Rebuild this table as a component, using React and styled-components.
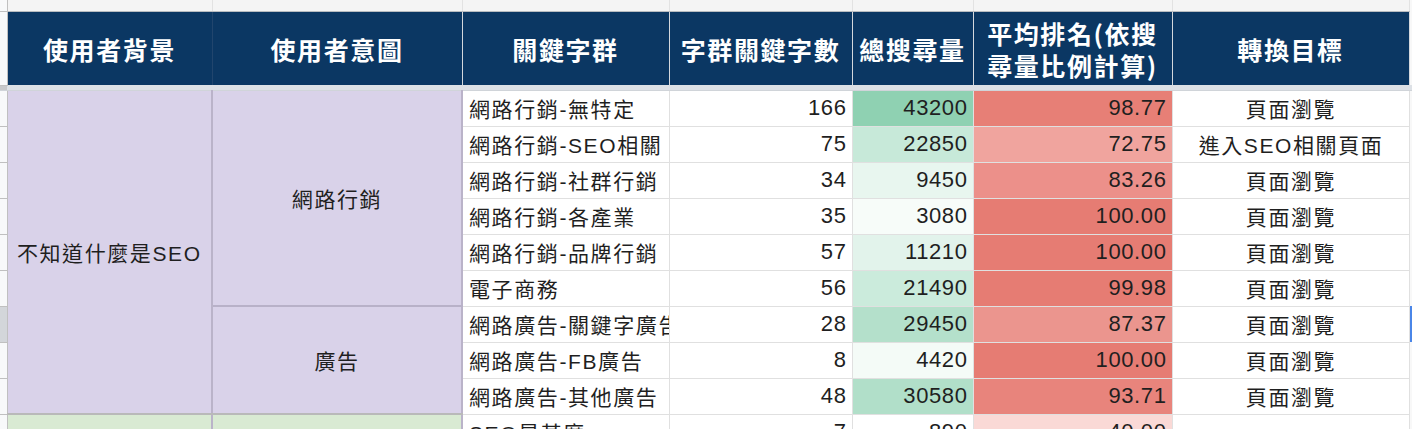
import styled, { createGlobalStyle } from "styled-components";

const GlobalStyle = createGlobalStyle`
  html, body {
    margin: 0;
    padding: 0;
    background: #ffffff;
    overflow: hidden;
  }
`;

const FONT = `"Liberation Sans", "Noto Sans CJK TC", sans-serif`;

const rows = [
  { name: "網路行銷-無特定", count: 166, volume: 43200, rank: "98.77", goal: "頁面瀏覽", green: "#8fd1b2", red: "#e77f76" },
  { name: "網路行銷-SEO相關", count: 75, volume: 22850, rank: "72.75", goal: "進入SEO相關頁面", green: "#c7e9d9", red: "#f0a49e" },
  { name: "網路行銷-社群行銷", count: 34, volume: 9450, rank: "83.26", goal: "頁面瀏覽", green: "#e8f6ef", red: "#ec908a" },
  { name: "網路行銷-各產業", count: 35, volume: 3080, rank: "100.00", goal: "頁面瀏覽", green: "#f7fcf9", red: "#e67c73" },
  { name: "網路行銷-品牌行銷", count: 57, volume: 11210, rank: "100.00", goal: "頁面瀏覽", green: "#e2f3eb", red: "#e67c73" },
  { name: "電子商務", count: 56, volume: 21490, rank: "99.98", goal: "頁面瀏覽", green: "#cbebdc", red: "#e67c73" },
  { name: "網路廣告-關鍵字廣告", count: 28, volume: 29450, rank: "87.37", goal: "頁面瀏覽", green: "#b4e0cb", red: "#eb958e" },
  { name: "網路廣告-FB廣告", count: 8, volume: 4420, rank: "100.00", goal: "頁面瀏覽", green: "#f4fbf7", red: "#e67c73" },
  { name: "網路廣告-其他廣告", count: 48, volume: 30580, rank: "93.71", goal: "頁面瀏覽", green: "#b1dfc9", red: "#e8847c" },
];

const SELECTED_ROW = 6;

const Sheet = styled.table`
  border-collapse: collapse;
  table-layout: fixed;
  width: 1414px;
  font-family: ${FONT};
  color: #1f1f1f;
`;

const Gutter = styled.td`
  padding: 0;
  background: ${(p) => (p.$selected ? "#d3d6da" : "#f8f9fa")};
  border-right: 1px solid #c0c0c0;
  border-bottom: 1px solid #c0c0c0;
`;

const TopCell = styled.td`
  height: 11px;
  padding: 0;
  background: #f4f4f4;
  border-right: 1px solid #e2e2e2;
  border-bottom: 1px solid #b9bcc0;
`;

const HeadCell = styled.th`
  height: 73px;
  padding: 0 4px;
  background: #0b3763;
  color: #ffffff;
  font-family: "Noto Sans CJK TC", "Liberation Sans", sans-serif;
  font-size: 25px;
  font-weight: 700;
  letter-spacing: 1.6px;
  line-height: 32px;
  text-align: center;
  vertical-align: middle;
  white-space: nowrap;
  border-right: 1px solid ${(p) => (p.$soft ? "#21456d" : "#d4d8dd")};
`;

const GapCell = styled.td`
  height: 4px;
  padding: 0;
  background: ${(p) => (p.$gutter ? "#c8c9cb" : "#dde1e6")};
  border-bottom: 1px solid #d0d4d9;
`;

const GroupCell = styled.td`
  padding: 0 6px;
  background: ${(p) => p.$bg};
  font-size: 21px;
  letter-spacing: 1.6px;
  text-align: center;
  vertical-align: middle;
  white-space: nowrap;
  border-right: 2px solid #bab3c9;
  border-bottom: 2px solid ${(p) => (p.$last ? "#b9b9b9" : "#b8b1c8")};
`;

const Cell = styled.td`
  height: 35px;
  padding: 0 5px 0 6px;
  background: ${(p) => p.$bg || "#ffffff"};
  font-size: ${(p) => (p.$num ? "22px" : "21px")};
  letter-spacing: ${(p) => (p.$num ? "0.6px" : "1.6px")};
  text-align: ${(p) => (p.$num ? "right" : p.$align || "left")};
  vertical-align: middle;
  white-space: nowrap;
  overflow: hidden;
  border-right: 1px solid #e0e0e0;
  border-bottom: 1px solid #e0e0e0;
`;

const EdgeCell = styled.td`
  padding: 0;
  background: ${(p) => (p.$selected ? "#4a86e8" : "#f8f8f8")};
  border-left: 1px solid #d6d6d6;
`;

const widths = [7, 205, 250, 207, 183, 121, 199, 237, 5];

const App = () => {
  return (
    <>
      <GlobalStyle />
      <Sheet>
        <colgroup>
          {widths.map((w, i) => (
            <col key={i} style={{ width: w }} />
          ))}
        </colgroup>
        <tbody>
          <tr>
            <Gutter />
            {widths.slice(1, 8).map((_, i) => (
              <TopCell key={i} />
            ))}
            <EdgeCell />
          </tr>
          <tr>
            <Gutter />
            <HeadCell $soft>使用者背景</HeadCell>
            <HeadCell>使用者意圖</HeadCell>
            <HeadCell>關鍵字群</HeadCell>
            <HeadCell>字群關鍵字數</HeadCell>
            <HeadCell>總搜尋量</HeadCell>
            <HeadCell>
              平均排名(依搜
              <br />
              尋量比例計算)
            </HeadCell>
            <HeadCell>轉換目標</HeadCell>
            <EdgeCell />
          </tr>
          <tr>
            <GapCell $gutter />
            {widths.slice(1).map((_, i) => (
              <GapCell key={i} />
            ))}
          </tr>
          {rows.map((r, i) => (
            <tr key={r.name}>
              <Gutter $selected={i === SELECTED_ROW} />
              {i === 0 && (
                <GroupCell rowSpan={9} $bg="#d9d2e9" $last>
                  不知道什麼是SEO
                </GroupCell>
              )}
              {i === 0 && (
                <GroupCell rowSpan={6} $bg="#d9d2e9">
                  網路行銷
                </GroupCell>
              )}
              {i === 6 && (
                <GroupCell rowSpan={3} $bg="#d9d2e9" $last>
                  廣告
                </GroupCell>
              )}
              <Cell>{r.name}</Cell>
              <Cell $num>{r.count}</Cell>
              <Cell $num $bg={r.green}>
                {r.volume}
              </Cell>
              <Cell $num $bg={r.red}>
                {r.rank}
              </Cell>
              <Cell $align="center">{r.goal}</Cell>
              <EdgeCell $selected={i === SELECTED_ROW} />
            </tr>
          ))}
          <tr>
            <Gutter />
            <GroupCell $bg="#d9ead3" />
            <GroupCell $bg="#d9ead3" />
            <Cell>SEO是甚麼</Cell>
            <Cell $num>7</Cell>
            <Cell $num>890</Cell>
            <Cell $num $bg="#fad9d6">
              40.00
            </Cell>
            <Cell $align="center" />
            <EdgeCell />
          </tr>
        </tbody>
      </Sheet>
    </>
  );
};

export default App;
